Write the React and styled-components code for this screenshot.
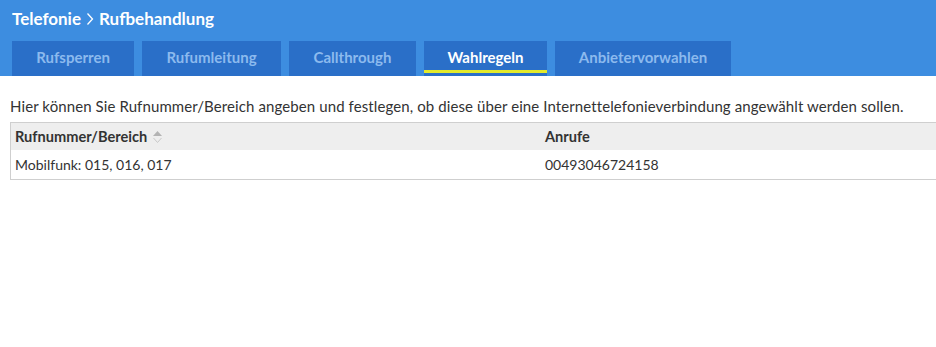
import React from "react";
import styled, { createGlobalStyle } from "styled-components";

const Global = createGlobalStyle`
  html, body { margin: 0; padding: 0; background: #fff; }
  body { font-family: Lato, "Noto Sans", sans-serif; color: #333; }
`;

const Header = styled.header`
  background: #3d8de0;
  padding: 6px 0 0 12px;
  display: flex;
  flex-direction: column;
  gap: 10px;
`;

const Title = styled.h1`
  margin: 0;
  color: #fff;
  font-size: 17px;
  font-weight: 700;
  line-height: 25px;
  display: flex;
  align-items: center;
  gap: 5px;
`;

const Tabs = styled.nav`
  display: flex;
  gap: 8px;
`;

const Tab = styled.div`
  height: 35px;
  box-sizing: border-box;
  width: ${(p) => p.$w}px;
  background: #2a6fc8;
  color: ${(p) => (p.$active ? "#fff" : "#8cbaee")};
  font-size: 15px;
  font-weight: 700;
  display: flex;
  align-items: center;
  justify-content: center;
  position: relative;
  padding-bottom: 3px;
  &::after {
    content: "";
    display: ${(p) => (p.$active ? "block" : "none")};
    position: absolute;
    left: 0;
    right: 0;
    bottom: 3px;
    height: 3px;
    background: #e3ea2b;
  }
`;

const Main = styled.main`
  padding: 20px 0 0 10px;
`;

const Intro = styled.p`
  margin: 0 0 6px;
  font-size: 15px;
  letter-spacing: 0.1px;
  line-height: 20px;
  color: #333;
`;

const Table = styled.div`
  border: 1px solid #cfcfcf;
  border-right: none;
  margin-right: -20px;
`;

const Row = styled.div`
  display: grid;
  grid-template-columns: 530px 1fr;
  height: ${(p) => (p.$head ? 27 : 29)}px;
  align-items: center;
  background: ${(p) => (p.$head ? "#eeeeee" : "#fff")};
  font-size: ${(p) => (p.$head ? 14.6 : 14)}px;
  font-weight: ${(p) => (p.$head ? 700 : 400)};
  color: #333;
`;

const Cell = styled.div`
  padding-left: 4px;
  display: flex;
  align-items: center;
  gap: 5px;
`;

const SortIcon = () => (
  <svg width="11" height="16" viewBox="0 0 11 16">
    <path d="M1 7 L5.5 2 L10 7 Z" fill="#b3b3b3" />
    <path d="M1.5 9 L5.5 13.5 L9.5 9" fill="none" stroke="#c9c9c9" strokeWidth="1" />
  </svg>
);

const tabs = [
  ["Rufsperren", 122],
  ["Rufumleitung", 139],
  ["Callthrough", 127],
  ["Wahlregeln", 123],
  ["Anbietervorwahlen", 176],
];

export default function App() {
  return (
    <>
      <Global />
      <Header>
        <Title>
          Telefonie
          <svg width="8" height="14" viewBox="0 0 8 14">
            <path d="M1.5 1.5 L6.5 7 L1.5 12.5" fill="none" stroke="#fff" strokeWidth="1.3" />
          </svg>
          Rufbehandlung
        </Title>
        <Tabs>
          {tabs.map(([t, w]) => (
            <Tab key={t} $w={w} $active={t === "Wahlregeln"}>
              {t}
            </Tab>
          ))}
        </Tabs>
      </Header>
      <Main>
        <Intro>
          Hier können Sie Rufnummer/Bereich angeben und festlegen, ob diese über eine
          Internettelefonieverbindung angewählt werden sollen.
        </Intro>
        <Table>
          <Row $head>
            <Cell>
              <span>Rufnummer/Bereich</span>
              <SortIcon />
            </Cell>
            <Cell>Anrufe</Cell>
          </Row>
          <Row>
            <Cell>Mobilfunk: 015, 016, 017</Cell>
            <Cell>00493046724158</Cell>
          </Row>
        </Table>
      </Main>
    </>
  );
}
